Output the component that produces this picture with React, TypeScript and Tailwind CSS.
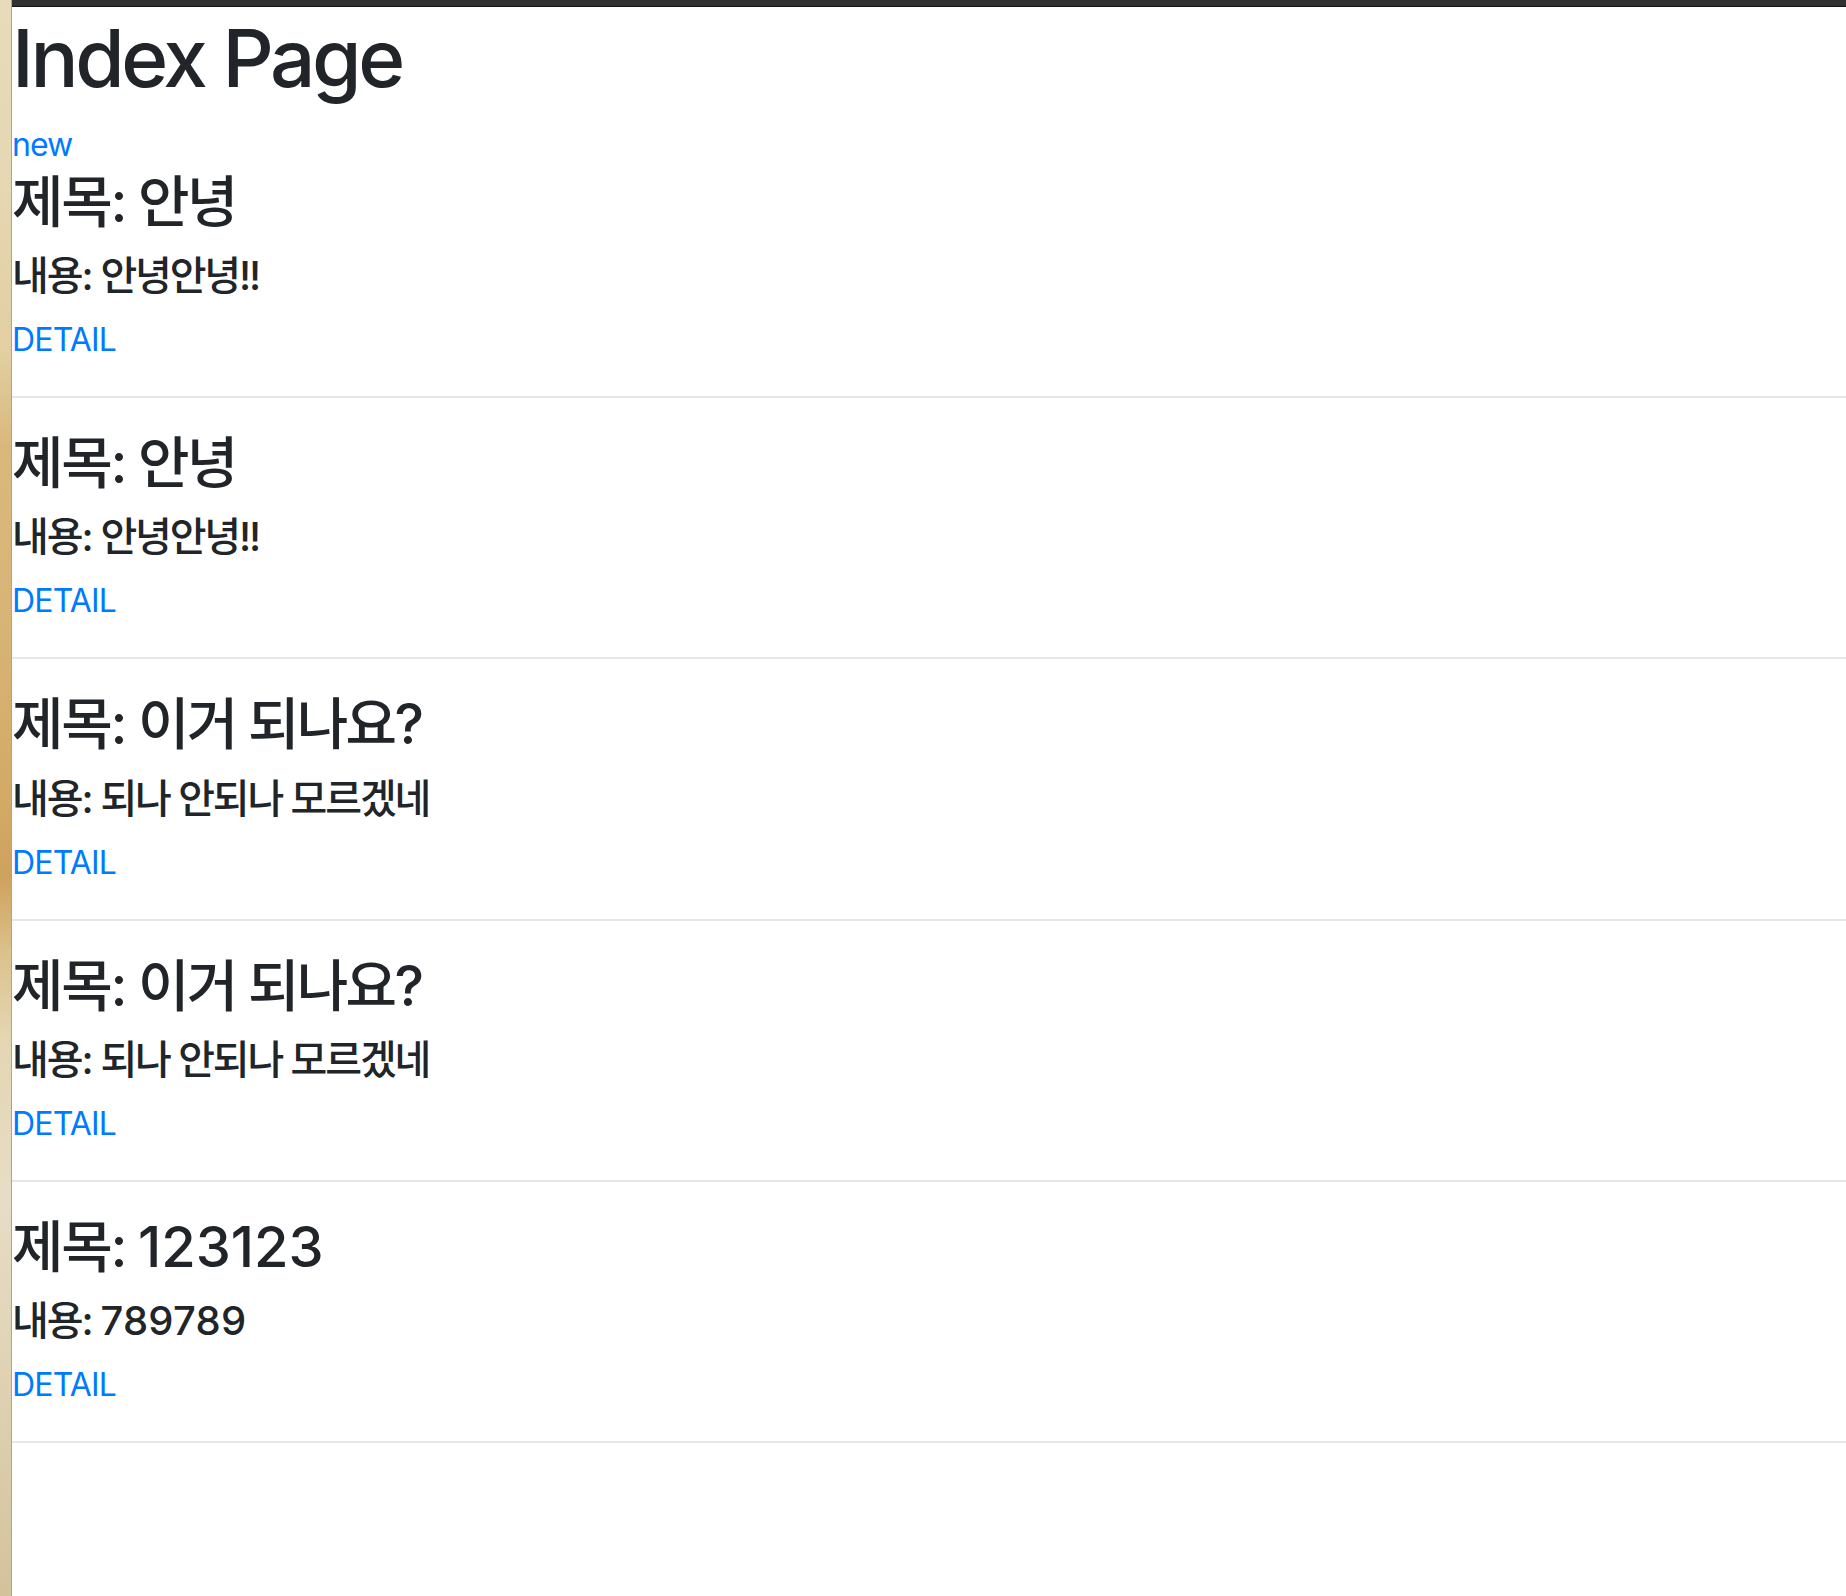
import React from "react";

const posts = [
  { title: "안녕", content: "안녕안녕!!", num: false },
  { title: "안녕", content: "안녕안녕!!", num: false },
  { title: "이거 되나요?", content: "되나 안되나 모르겠네", num: false },
  { title: "이거 되나요?", content: "되나 안되나 모르겠네", num: false },
  { title: "123123", content: "789789", num: true },
];

export default function App() {
  return (
    <div className="flex min-h-[1596px] w-full font-['Inter','Noto_Sans_CJK_KR',sans-serif] text-[#212529]">
      <div className="w-[12px] shrink-0 border-r border-[#b8a47a] bg-[linear-gradient(to_bottom,#e7dbbb_0%,#e5d7b2_12%,#e2cfa2_22%,#d9b87c_28%,#d8b577_38%,#d3aa66_50%,#cfa25e_55%,#dcc38e_60%,#e4d6b3_65%,#e7ddc6_75%,#e0d4b6_85%,#d3c39c_100%)]" />
      <div className="flex min-w-0 flex-1 flex-col bg-white">
        <div className="h-[7px] shrink-0 border-b border-[#141414] bg-[#313131]" />
        <h1 className="mt-[3px] mb-[15px] text-[80px] font-medium leading-[96px] tracking-[-0.042em]">Index Page</h1>
        <div>
          <a className="text-[32px] leading-[48px] tracking-[-0.03em] text-[#007bff]" href="#">
            new
          </a>
        </div>
        {posts.map((p, i) => (
          <div key={i}>
            {i > 0 && <hr className="my-[32px] border-0 border-t-2 border-[#e6e6e6]" />}
            <h3 className="mb-[16px] text-[56px] font-medium leading-[67.2px] tracking-[-0.04em]">
              제목: <span className={p.num ? "tracking-[0em]" : "tracking-[-0.048em]"}>{p.title}</span>
            </h3>
            <h5 className="mb-[16px] text-[40px] font-medium leading-[48px] tracking-[-0.05em]">
              내용: <span className={p.num ? "tracking-[0.006em]" : "tracking-[-0.054em]"}>{p.content}</span>
            </h5>
            <div>
              <a className="text-[32px] leading-[48px] tracking-[-0.026em] text-[#007bff]" href="#">
                DETAIL
              </a>
            </div>
          </div>
        ))}
        <hr className="my-[32px] border-0 border-t-2 border-[#e6e6e6]" />
      </div>
    </div>
  );
}
